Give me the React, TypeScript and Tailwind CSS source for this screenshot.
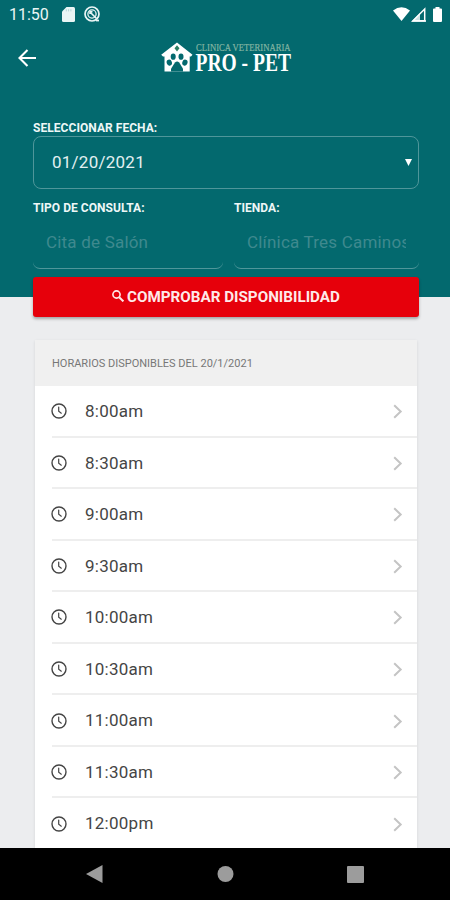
import { ReactNode } from 'react';

const slots = [
  '8:00am',
  '8:30am',
  '9:00am',
  '9:30am',
  '10:00am',
  '10:30am',
  '11:00am',
  '11:30am',
  '12:00pm',
];

function StatusBar() {
  return (
    <div className="flex h-7 items-center justify-between pl-[9px] pr-2 text-[#eaf5f5]">
      <div className="flex items-center">
        <span className="w-[53px] text-[16px] leading-[29px]">11:50</span>
        <svg className="h-[15px] w-[13px]" viewBox="0 0 13 15" fill="currentColor">
          <path d="M4.5 0H11.5Q13 0 13 1.5V13.5Q13 15 11.5 15H1.5Q0 15 0 13.5V4.5Z" />
          <path d="M4.3 2.2V4.4M6.6 2.2V4.4M8.9 2.2V4.4" stroke="#b5d5d7" strokeWidth="1" />
        </svg>
        <svg className="ml-[9px] h-4 w-4" viewBox="0 0 16 16" fill="none" stroke="currentColor">
          <circle cx="8" cy="8" r="7" strokeWidth="1.7" />
          <circle cx="8" cy="8" r="4.1" strokeWidth="1.3" />
          <path d="M6 6L12.5 12.5M6 8V5.8H8.5" strokeWidth="1.6" />
          <path d="M12 14.5H15" strokeWidth="1.8" />
        </svg>
      </div>
      <div className="flex items-center">
        <svg className="h-[14px] w-[17px]" viewBox="0 0 17 14" fill="white">
          <path d="M0 3.5Q8.5 -3 17 3.5L8.5 14Z" />
        </svg>
        <svg className="ml-[1px] h-[15px] w-[15px]" viewBox="0 0 15 15">
          <path d="M13.7 2V13.8H2Z" fill="none" stroke="white" strokeWidth="1.5" />
          <path d="M0 15L9 6V13H15V15Z" fill="white" fillOpacity="0.8" />
        </svg>
        <svg className="ml-[7px] h-[15px] w-[9px]" viewBox="0 0 9 15" fill="white">
          <path d="M2.5 0H6.5V1.5H8Q9 1.5 9 2.5V14Q9 15 8 15H1Q0 15 0 14V2.5Q0 1.5 1 1.5H2.5Z" />
        </svg>
      </div>
    </div>
  );
}

function Logo() {
  return (
    <svg className="h-10 w-[132px]" viewBox="0 0 132 40">
      <path d="M17 4.5L32.5 16.8L31 18.5H29.7V33.5H4.5V18.5H3L1.2 16.8Z" fill="white" />
      <path d="M17 7.2L19.5 10.3L17 13.4L14.5 10.3Z" fill="#2c7e62" />
      <g fill="#03696e">
        <ellipse cx="13.2" cy="18.7" rx="2.5" ry="3.1" />
        <ellipse cx="21" cy="18.7" rx="2.5" ry="3.1" />
        <ellipse cx="9.3" cy="24.6" rx="2.6" ry="3" transform="rotate(-20 9.3 24.6)" />
        <ellipse cx="24.9" cy="24.6" rx="2.6" ry="3" transform="rotate(20 24.9 24.6)" />
        <path d="M11 33.5V30.8L15 24.6Q17.1 22.6 19.2 24.6L23 30.8V33.5Z" />
      </g>
      <text
        x="36"
        y="12.8"
        textLength="94.5"
        lengthAdjust="spacingAndGlyphs"
        fill="#83b5a2"
        stroke="#83b5a2"
        strokeWidth="0.2"
        className="font-['Liberation_Serif',serif] text-[10.5px]"
      >
        CLINICA VETERINARIA
      </text>
      <text
        x="35.5"
        y="33.2"
        textLength="95.5"
        lengthAdjust="spacingAndGlyphs"
        fill="white"
        className="font-['Liberation_Serif',serif] text-[25px] font-bold"
      >
        PRO - PET
      </text>
    </svg>
  );
}

function Label({ children }: { children: ReactNode }) {
  return (
    <div className="h-4 whitespace-nowrap text-[12px] font-bold leading-4 tracking-[0.05px] text-[#eef7f7]">
      {children}
    </div>
  );
}

function DisabledField({ label, value }: { label: string; value: string }) {
  return (
    <div className="min-w-0">
      <Label>{label}</Label>
      <div className="h-[53px] rounded-[7px] border-b border-[#4f969a] px-[13px]">
        <div className="overflow-hidden whitespace-nowrap text-[17px] leading-[53px] tracking-[0.2px] text-[#3f898e]">
          {value}
        </div>
      </div>
    </div>
  );
}

function SlotRow({ time }: { time: string }) {
  return (
    <li className="ml-[17px] flex h-[51.55px] items-center border-b-2 border-[#eeeeee] pr-[14px]">
      <svg
        className="-ml-px mt-px h-4 w-4"
        viewBox="0 0 16 16"
        fill="none"
        stroke="#444444"
        strokeWidth="1.4"
        strokeLinecap="round"
      >
        <circle cx="8" cy="8" r="7" />
        <path d="M7.7 4V8.3L10.3 10.2" strokeWidth="1.2" />
      </svg>
      <span className="ml-[18px] mt-0.5 flex-1 text-[17px] tracking-[0.25px] text-[#454545]">{time}</span>
      <svg className="mt-0.5 h-[15px] w-[10px]" viewBox="0 0 10 15" fill="none" stroke="#c4c4c4" strokeWidth="2">
        <path d="M1.2 1.2L7.7 7.5L1.2 13.8" />
      </svg>
    </li>
  );
}

export default function App() {
  return (
    <div className="flex h-[900px] w-[450px] flex-col overflow-hidden bg-[#ecedef] font-[Roboto,sans-serif]">
      <header className="h-[297px] shrink-0 bg-[#03696e]">
        <StatusBar />
        <div className="grid h-[60px] grid-cols-[160px_132px_1fr] items-center">
          <svg
            className="-mt-px ml-[18px] h-[18px] w-[18px]"
            viewBox="0 0 18 18"
            fill="none"
            stroke="white"
            strokeWidth="2.1"
          >
            <path d="M18 9H1.5M9.5 1L1.5 9L9.5 17" />
          </svg>
          <Logo />
        </div>
        <form className="ml-[33px] mt-8 w-[386px]">
          <Label>SELECCIONAR FECHA:</Label>
          <div className="flex h-[53px] items-center justify-between rounded-[8px] border border-[#4f969a] pl-[18px] pr-[6px] text-[#e2f0f1]">
            <span className="text-[17px] tracking-[0.25px]">01/20/2021</span>
            <svg className="h-[7px] w-[7px]" viewBox="0 0 7 7" fill="white">
              <path d="M0 0H7L3.5 7Z" />
            </svg>
          </div>
          <div className="mt-[11px] grid grid-cols-[190px_185px] gap-[11px]">
            <DisabledField label="TIPO DE CONSULTA:" value="Cita de Salón" />
            <DisabledField label="TIENDA:" value="Clínica Tres Caminos" />
          </div>
          <button
            type="button"
            className="mt-2 flex h-10 w-full items-center justify-center rounded-[3px] bg-[#e6000b] text-[15.2px] font-bold text-[#ffe9e9] shadow-[0_2px_3px_rgba(0,0,0,0.3)]"
          >
            <svg
              className="-mt-0.5 mr-[3px] h-3 w-3"
              viewBox="0 0 12 12"
              fill="none"
              stroke="currentColor"
              strokeWidth="1.6"
            >
              <circle cx="4.5" cy="4.5" r="3.6" />
              <path d="M7.2 7.2L11.4 11.4" strokeWidth="2" />
            </svg>
            COMPROBAR DISPONIBILIDAD
          </button>
        </form>
      </header>

      <main className="ml-[35px] mt-[43px] h-[508px] w-[382px] shrink-0 overflow-hidden bg-white shadow-[0_1px_3px_rgba(0,0,0,0.1)]">
        <h2 className="h-[46px] bg-[#f0f0f0] pl-[17px] text-[11px] leading-[47px] text-[#777777]">
          HORARIOS DISPONIBLES DEL 20/1/2021
        </h2>
        <ul>
          {slots.map((time) => (
            <SlotRow key={time} time={time} />
          ))}
        </ul>
      </main>

      <nav className="h-[52px] shrink-0 bg-black">
        <svg className="h-[52px] w-[450px]" viewBox="0 0 450 52" fill="#9c9c9c">
          <path d="M86 26L102.5 17V35Z" />
          <circle cx="225.5" cy="26" r="8" />
          <rect x="347" y="18" width="17" height="17" rx="1" />
        </svg>
      </nav>
    </div>
  );
}
